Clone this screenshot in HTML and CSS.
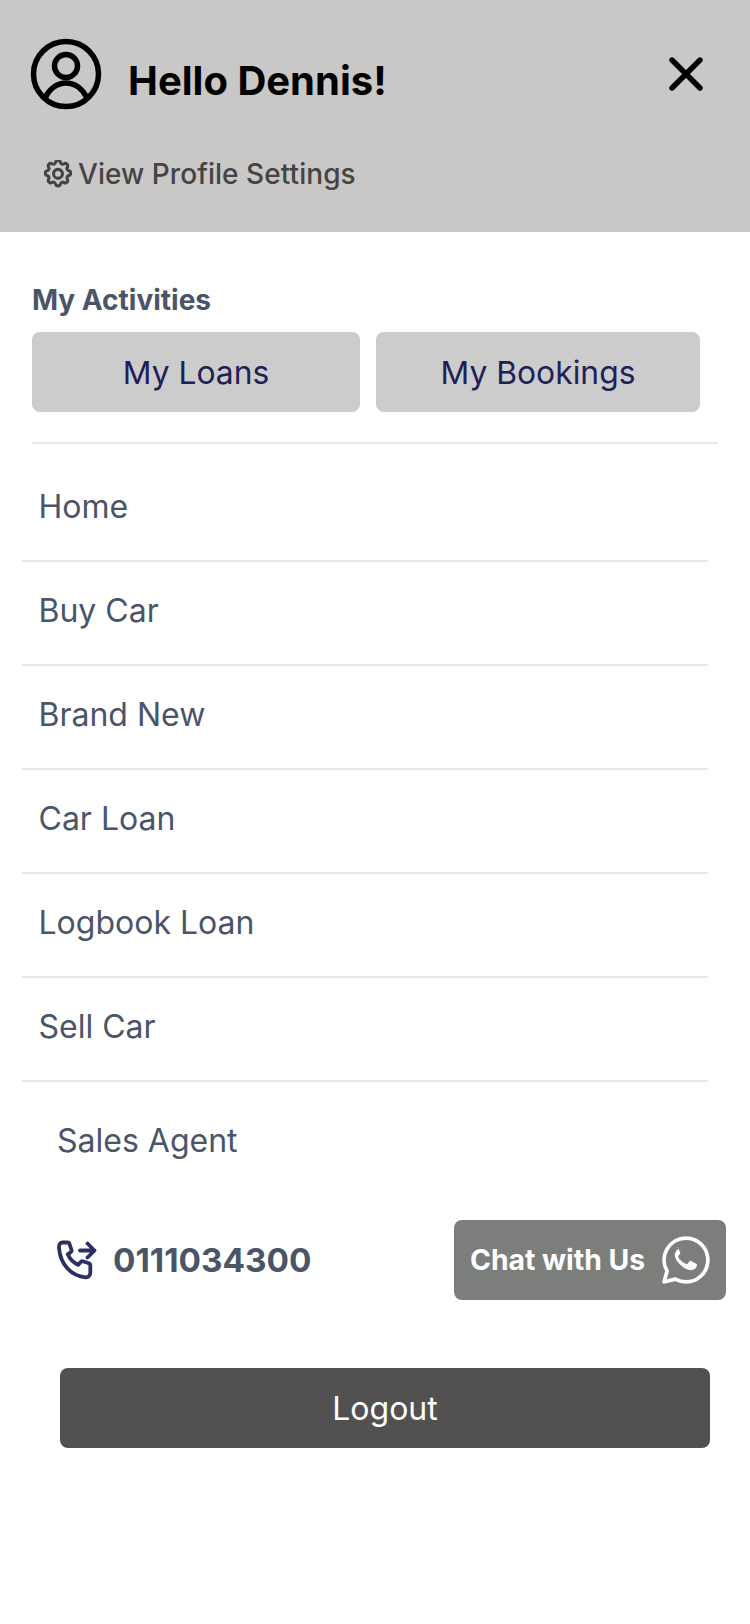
FILE: index.html
```html
<!DOCTYPE html>
<html lang="en">
<head>
    <meta charset="UTF-8">
    <meta name="viewport" content="width=device-width, initial-scale=1.0">
    <title>Menu</title>
    <link rel="stylesheet" href="styles.css">
</head>
<body>
    <header class="head">
        <div class="head-top">
            <svg class="avatar" viewBox="0 0 72 72" fill="none" stroke="#000" stroke-width="5.5">
                <circle cx="36" cy="36" r="32.5"/>
                <circle cx="36" cy="28" r="11.5"/>
                <path d="M15 60c4-9 12-15 21-15s17 6 21 15"/>
            </svg>
            <div class="hello">Hello Dennis!</div>
            <svg class="close" viewBox="0 0 34 34" fill="none" stroke="#000" stroke-width="5.4" stroke-linecap="round">
                <path d="M3 3l28 28M31 3L3 31"/>
            </svg>
        </div>
        <a class="settings">
            <svg class="gear" viewBox="2 2 20 20" fill="none" stroke="#444" stroke-width="2.200" stroke-linejoin="round">
                <path d="M10.3 3.600c.4-1.700 2.900-1.700 3.400 0a1.700 1.700 0 0 0 2.600 1.100c1.500-.9 3.300.8 2.400 2.400a1.700 1.700 0 0 0 1.100 2.600c1.700.4 1.700 2.900 0 3.400a1.700 1.700 0 0 0-1.100 2.600c.9 1.500-.8 3.300-2.400 2.400a1.700 1.700 0 0 0-2.600 1.100c-.4 1.700-2.900 1.700-3.400 0a1.700 1.700 0 0 0-2.600-1.100c-1.500.9-3.300-.8-2.400-2.400a1.700 1.700 0 0 0-1.100-2.600c-1.700-.4-1.700-2.900 0-3.400a1.700 1.700 0 0 0 1.100-2.600c-.9-1.500.8-3.300 2.400-2.400a1.700 1.700 0 0 0 2.600-1.100z"/>
                <circle cx="12" cy="11.900" r="3.200"/>
            </svg>
            <span>View Profile Settings</span>
        </a>
    </header>

    <section class="activities">
        <div class="activities-title">My Activities</div>
        <div class="activities-btns">
            <a class="btn-loans">My Loans</a>
            <a class="btn-bookings">My Bookings</a>
        </div>
    </section>

    <nav class="menu">
        <a class="menu-item">Home</a>
        <a class="menu-item">Buy Car</a>
        <a class="menu-item">Brand New</a>
        <a class="menu-item">Car Loan</a>
        <a class="menu-item">Logbook Loan</a>
        <a class="menu-item">Sell Car</a>
    </nav>

    <div class="agent">Sales Agent</div>

    <div class="contact">
        <div class="phone">
            <svg class="phone-icon" viewBox="0 0 40 40" fill="none" stroke="#2b2f63" stroke-width="3.800" stroke-linecap="round" stroke-linejoin="round">
                <path d="M5 2.500h5.500c1 0 1.700.6 2 1.500l2 6c.3.8 0 1.600-.7 2.100l-3 2.200c2 4.700 6 8.700 10.600 10.600l2.300-3c.5-.7 1.300-1 2.100-.7l6 2c.9.300 1.500 1 1.500 2V33c0 2.500-2 4.500-4.500 4.300C14.300 36 3.500 25 2 8c-.2-3 1-5.500 3-5.500z"/>
                <path d="M23 10.500h14M30.500 3.500l7 7-7 7"/>
            </svg>
            <span>0111034300</span>
        </div>
        <a class="chat">
            <span>Chat with Us</span>
            <svg class="wa" viewBox="0 0 48 48" fill="none">
                <path d="M24 3a21 21 0 0 1 0 42c-3.700 0-7.200-1-10.300-2.700L3 45l2.800-10.400A21 21 0 0 1 24 3z" stroke="#fff" stroke-width="3.600" stroke-linejoin="round"/>
                <path d="M17.500 13.500c-.6 0-1.500.3-2.200 1.100-.8.900-2.300 2.500-2 5.300.3 3 2.300 6 5.800 9.200 3.500 3.200 6.600 4.700 9.600 4.700 2.500 0 4.500-1.500 5.300-3 .5-1 .6-2.400.4-2.800-.2-.4-.7-.6-1.400-1l-4-2c-.7-.3-1.200-.5-1.700.2l-1.800 2.300c-.4.500-.8.500-1.500.2-1-.5-2.600-1-4.400-2.700-1.600-1.500-2.700-3.100-3-3.800-.3-.7 0-1 .3-1.400l1.400-1.700c.3-.5.300-.8.100-1.300l-1.800-4.200c-.3-.8-.7-1.100-1.300-1.100z" fill="#fff"/>
            </svg>
        </a>
    </div>

    <a class="logout">Logout</a>
</body>
</html>
```

FILE: styles.css
```css
* {
    box-sizing: border-box;
}
body {
    font-family: 'Inter', sans-serif;
    background-color: #ffffff;
    color: #4a5568;
    margin: 0;
    height: 1624px;
}
.head {
    background-color: #c9c8c6;
    height: 232px;
    padding: 38px 47px 0 30px;
}
.head-top {
    display: flex;
    align-items: flex-start;
}
.avatar {
    width: 72px;
    height: 72px;
    flex: none;
}
.hello {
    font-size: 40px;
    font-weight: 700;
    color: #000000;
    line-height: 48px;
    margin: 19px 0 0 26px;
}
.close {
    width: 34px;
    height: 34px;
    margin: 19px 0 0 auto;
}
.settings {
    display: flex;
    align-items: center;
    margin: 44px 0 0 14px;
    font-size: 28px;
    font-weight: 500;
    line-height: 40px;
    letter-spacing: 0.05px;
    color: #444444;
}
.gear {
    width: 28px;
    height: 28px;
    margin-right: 6px;
}
.activities {
    padding: 50px 32px 0 32px;
}
.activities-title {
    font-size: 28px;
    font-weight: 700;
    line-height: 36px;
}
.activities-btns {
    display: flex;
    gap: 16px;
    margin-top: 14px;
    padding-bottom: 30px;
    border-bottom: 2px solid #e2e8f0;
}
.activities-btns a {
    height: 80px;
    display: flex;
    align-items: center;
    justify-content: center;
    background-color: #cccccc;
    border-radius: 8px;
    color: #1e2156;
    font-size: 31.8px;
}
.btn-loans {
    width: 328px;
}
.btn-bookings {
    width: 324px;
}
.menu {
    margin-left: 22px;
    width: 686px;
}
.menu-item {
    display: flex;
    align-items: center;
    height: 104px;
    padding: 0 0 5px 16.5px;
    font-size: 32px;
    border-bottom: 2px solid #e2e8f0;
}
.menu-item:first-child {
    height: 118px;
    padding-top: 8px;
    padding-bottom: 0;
}
.agent {
    font-size: 32px;
    line-height: 40px;
    margin: 39px 0 0 57px;
}
.contact {
    display: flex;
    align-items: center;
    justify-content: space-between;
    margin-top: 59px;
    padding: 0 24px 0 57px;
}
.phone {
    display: flex;
    align-items: center;
    gap: 16px;
    font-size: 33.3px;
    font-weight: 700;
}
.phone-icon {
    width: 40px;
    height: 40px;
}
.chat {
    display: flex;
    align-items: center;
    justify-content: space-between;
    width: 272px;
    height: 80px;
    padding: 0 15px 0 16px;
    background-color: #7b7e7a;
    border-radius: 8px;
    color: #ffffff;
    font-size: 28.3px;
    font-weight: 700;
}
.wa {
    width: 50px;
    height: 50px;
}
.logout {
    display: flex;
    align-items: center;
    justify-content: center;
    width: 650px;
    height: 80px;
    margin: 68px 0 0 60px;
    background-color: #52514f;
    border-radius: 8px;
    color: #ffffff;
    font-size: 32px;
}
```
